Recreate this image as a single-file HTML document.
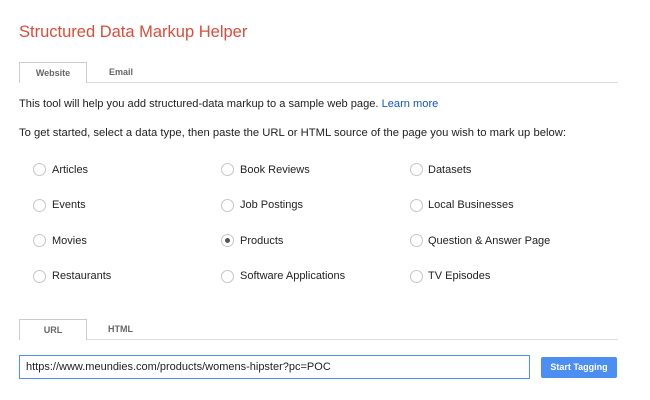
<!DOCTYPE html>
<html><head><style>
body{margin:0;width:650px;height:400px;background:#fff;font-family:"Liberation Sans",Arial,sans-serif;position:relative;overflow:hidden;color:#222}
.a{position:absolute;white-space:nowrap}
.r{position:absolute;width:11px;height:11px;border:1px solid #c6c6c6;border-radius:50%;background:#fff}
.r.on::after{content:"";position:absolute;left:3px;top:3px;width:5px;height:5px;border-radius:50%;background:#555}
.l{position:absolute;font-size:11px;color:#222;line-height:14px}
.tab{position:absolute;border:1px solid #ccc;border-bottom:none;background:#fff;font-size:9px;font-weight:bold;color:#666;text-align:center;box-sizing:border-box}
.t2{position:absolute;font-size:9px;font-weight:bold;color:#666}
.line{position:absolute;left:19px;width:599px;height:1px;background:#ddd}
</style></head><body>
<div class="a" style="left:19px;top:23px;font-size:16.5px;color:#dd4b39">Structured Data Markup Helper</div>

<div class="line" style="top:82px"></div>
<div class="tab" style="left:19px;top:62px;width:68px;height:21px;line-height:20px">Website</div>
<div class="t2" style="left:109px;top:67px">Email</div>

<div class="a" style="left:19px;top:98px;font-size:11.1px">This tool will help you add structured-data markup to a sample web page. <span style="color:#1155cc">Learn more</span></div>
<div class="a" style="left:19px;top:127px;font-size:11.25px">To get started, select a data type, then paste the URL or HTML source of the page you wish to mark up below:</div>

<div class="r" style="left:33px;top:163px"></div><div class="l" style="left:52px;top:163px">Articles</div>
<div class="r" style="left:221px;top:163px"></div><div class="l" style="left:240px;top:163px">Book Reviews</div>
<div class="r" style="left:410px;top:163px"></div><div class="l" style="left:428px;top:163px">Datasets</div>

<div class="r" style="left:33px;top:199px"></div><div class="l" style="left:52px;top:198px">Events</div>
<div class="r" style="left:221px;top:199px"></div><div class="l" style="left:240px;top:198px">Job Postings</div>
<div class="r" style="left:410px;top:199px"></div><div class="l" style="left:428px;top:198px">Local Businesses</div>

<div class="r" style="left:33px;top:234px"></div><div class="l" style="left:52px;top:234px">Movies</div>
<div class="r on" style="left:221px;top:234px"></div><div class="l" style="left:240px;top:234px">Products</div>
<div class="r" style="left:410px;top:234px"></div><div class="l" style="left:428px;top:234px">Question &amp; Answer Page</div>

<div class="r" style="left:33px;top:270px"></div><div class="l" style="left:52px;top:269px">Restaurants</div>
<div class="r" style="left:221px;top:270px"></div><div class="l" style="left:240px;top:269px">Software Applications</div>
<div class="r" style="left:410px;top:270px"></div><div class="l" style="left:428px;top:269px">TV Episodes</div>

<div class="line" style="top:339px"></div>
<div class="tab" style="left:19px;top:319px;width:68px;height:21px;line-height:20px">URL</div>
<div class="t2" style="left:108px;top:324px">HTML</div>

<div class="a" style="left:19px;top:355px;height:22px;border:1px solid #4d90fe;font-size:11px;line-height:22px;padding-left:6px;width:503px">https://www.meundies.com/products/womens-hipster?pc=POC</div>
<div class="a" style="left:541px;top:357px;width:76px;height:21px;background:#4d8ef2;border-radius:2px;color:#fff;font-size:9px;font-weight:bold;text-align:center;line-height:21px">Start Tagging</div>
</body></html>
